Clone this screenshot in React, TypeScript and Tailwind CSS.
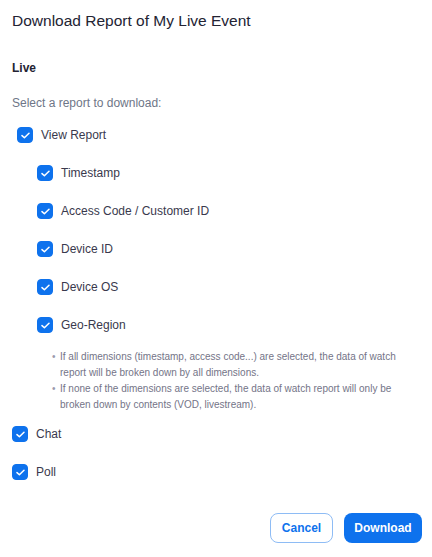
import { useState } from 'react';

type Item = { key: string; label: string };

const dims: Item[] = [
  { key: 'timestamp', label: 'Timestamp' },
  { key: 'access', label: 'Access Code / Customer ID' },
  { key: 'deviceId', label: 'Device ID' },
  { key: 'deviceOs', label: 'Device OS' },
  { key: 'geo', label: 'Geo-Region' },
];

function Check({ checked, onToggle }: { checked: boolean; onToggle: () => void }) {
  return (
    <button
      type="button"
      onClick={onToggle}
      className={
        'flex h-4 w-4 shrink-0 items-center justify-center rounded-[4px] border ' +
        (checked ? 'border-[#0e72ed] bg-[#0e72ed]' : 'border-[#babacc] bg-white')
      }
    >
      {checked && (
        <svg width="9" height="7" viewBox="0 0 9 7" fill="none">
          <path d="M1 3.6L3.4 5.8L8 1.2" stroke="white" strokeWidth="1.5" strokeLinecap="round" strokeLinejoin="round" />
        </svg>
      )}
    </button>
  );
}

function Row({
  label,
  checked,
  onToggle,
  className,
}: {
  label: string;
  checked: boolean;
  onToggle: () => void;
  className: string;
}) {
  return (
    <label className={'flex h-[38px] items-center gap-2 text-[12px] text-[#39394d] ' + className}>
      <Check checked={checked} onToggle={onToggle} />
      <span>{label}</span>
    </label>
  );
}

export default function App() {
  const [sel, setSel] = useState<Record<string, boolean>>({
    view: true,
    timestamp: true,
    access: true,
    deviceId: true,
    deviceOs: true,
    geo: true,
    chat: true,
    poll: true,
  });

  const toggle = (k: string) => setSel((s) => ({ ...s, [k]: !s[k] }));

  return (
    <div className="flex h-[557px] w-[432px] flex-col bg-white font-['Liberation_Sans',Arial,sans-serif]">
      <h1 className="mt-[9px] px-3 text-[15.5px] leading-6 text-[#232333]">Download Report of My Live Event</h1>

      <div className="mt-[26px] px-3 text-[12px] font-bold leading-[18px] text-[#232333]">Live</div>
      <div className="mt-[17px] px-3 text-[12px] leading-[18px] text-[#6e7687]">Select a report to download:</div>

      <div className="mt-1 flex flex-col">
        <Row label="View Report" checked={sel.view} onToggle={() => toggle('view')} className="pl-[17px]" />
        {dims.map((d) => (
          <Row key={d.key} label={d.label} checked={sel[d.key]} onToggle={() => toggle(d.key)} className="pl-[37px]" />
        ))}

        <ul className="mt-[5px] mb-[2px] w-[412px] pl-[52px] text-[10px] leading-4 text-[#747487]">
          <li className="flex gap-[4px]">
            <span className="w-[3px] shrink-0 text-[#9a9aad]">•</span>
            <span className="pl-[1px]">
              If all dimensions (timestamp, access code...) are selected, the data of watch report will be broken down by all dimensions.
            </span>
          </li>
          <li className="flex gap-[4px]">
            <span className="w-[3px] shrink-0 text-[#9a9aad]">•</span>
            <span className="pl-[1px]">
              If none of the dimensions are selected, the data of watch report will only be broken down by contents (VOD, livestream).
            </span>
          </li>
        </ul>

        <Row label="Chat" checked={sel.chat} onToggle={() => toggle('chat')} className="pl-3" />
        <Row label="Poll" checked={sel.poll} onToggle={() => toggle('poll')} className="pl-3" />
      </div>

      <div className="mt-[22px] flex justify-end gap-[11px] pr-[10px]">
        <button className="h-[30px] w-[63px] rounded-lg border border-[#8ebcf5] bg-white text-[12px] font-semibold text-[#0e72ed]">
          Cancel
        </button>
        <button className="h-[30px] w-[78px] rounded-lg bg-[#0e72ed] text-[12px] font-semibold text-white">
          Download
        </button>
      </div>
    </div>
  );
}
